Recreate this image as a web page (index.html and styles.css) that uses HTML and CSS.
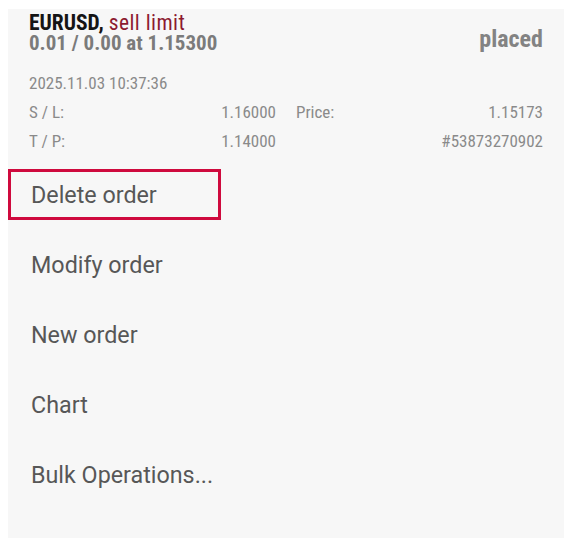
FILE: index.html
```html
<!DOCTYPE html>
<html>
<head>
<meta charset="utf-8">
<link rel="stylesheet" href="styles.css">
</head>
<body>
<div class="panel">
  <div class="head">
    <div class="head-row">
      <div class="title">
        <div class="line1"><span class="sym">EURUSD,</span> <span class="type">sell limit</span></div>
        <div class="line2">0.01 / 0.00 at 1.15300</div>
      </div>
      <div class="state">placed</div>
    </div>
    <div class="date">2025.11.03 10:37:36</div>
    <div class="grid">
      <div class="cell"><span>S / L:</span><span>1.16000</span></div>
      <div class="cell"><span>Price:</span><span>1.15173</span></div>
      <div class="cell"><span>T / P:</span><span>1.14000</span></div>
      <div class="cell"><span></span><span>#53873270902</span></div>
    </div>
  </div>
  <div class="menu">
    <div class="item">Delete order<span class="hl-box"></span></div>
    <div class="item">Modify order</div>
    <div class="item">New order</div>
    <div class="item">Chart</div>
    <div class="item">Bulk Operations...</div>
  </div>
</div>
</body>
</html>
```
FILE: styles.css
```css
html, body {
  margin: 0;
  padding: 0;
  background: #ffffff;
}
body {
  padding: 9px 6px 8px 8px;
  font-family: "Roboto Condensed", Roboto, sans-serif;
}
.panel {
  width: 556px;
  height: 529px;
  background: #f7f7f7;
  box-sizing: border-box;
}
.head {
  height: 151px;
  box-sizing: border-box;
  padding: 3px 21px 0 21px;
}
.head-row {
  display: flex;
  justify-content: space-between;
  align-items: flex-start;
}
.line1, .line2 {
  font-size: 21px;
  line-height: 21px;
  font-weight: 700;
}
.line1 { font-size: 21.5px; }
.sym { color: #151515; }
.type { color: #8c1a30; font-weight: 400; letter-spacing: 0.45px; }
.line2 { color: #7b7b7b; }
.state {
  font-size: 24px;
  line-height: 24px;
  font-weight: 700;
  color: #838383;
  padding-top: 15px;
}
.date {
  margin-top: 15px;
  font-size: 17px;
  line-height: 29px;
  color: #8a8a8a;
}
.grid {
  display: grid;
  grid-template-columns: 1fr 1fr;
  column-gap: 20px;
  font-size: 17px;
  line-height: 29px;
  color: #8a8a8a;
}
.cell {
  display: flex;
  justify-content: space-between;
}
.menu {
  display: flex;
  flex-direction: column;
}
.item {
  position: relative;
  height: 70px;
  display: flex;
  align-items: center;
  padding-left: 23px;
  font-family: Roboto, sans-serif;
  font-size: 23.3px;
  color: #575757;
}
.hl-box {
  position: absolute;
  left: 0;
  top: 9px;
  width: 213px;
  height: 51px;
  box-sizing: border-box;
  border: 3px solid #cf0a3e;
}
```
